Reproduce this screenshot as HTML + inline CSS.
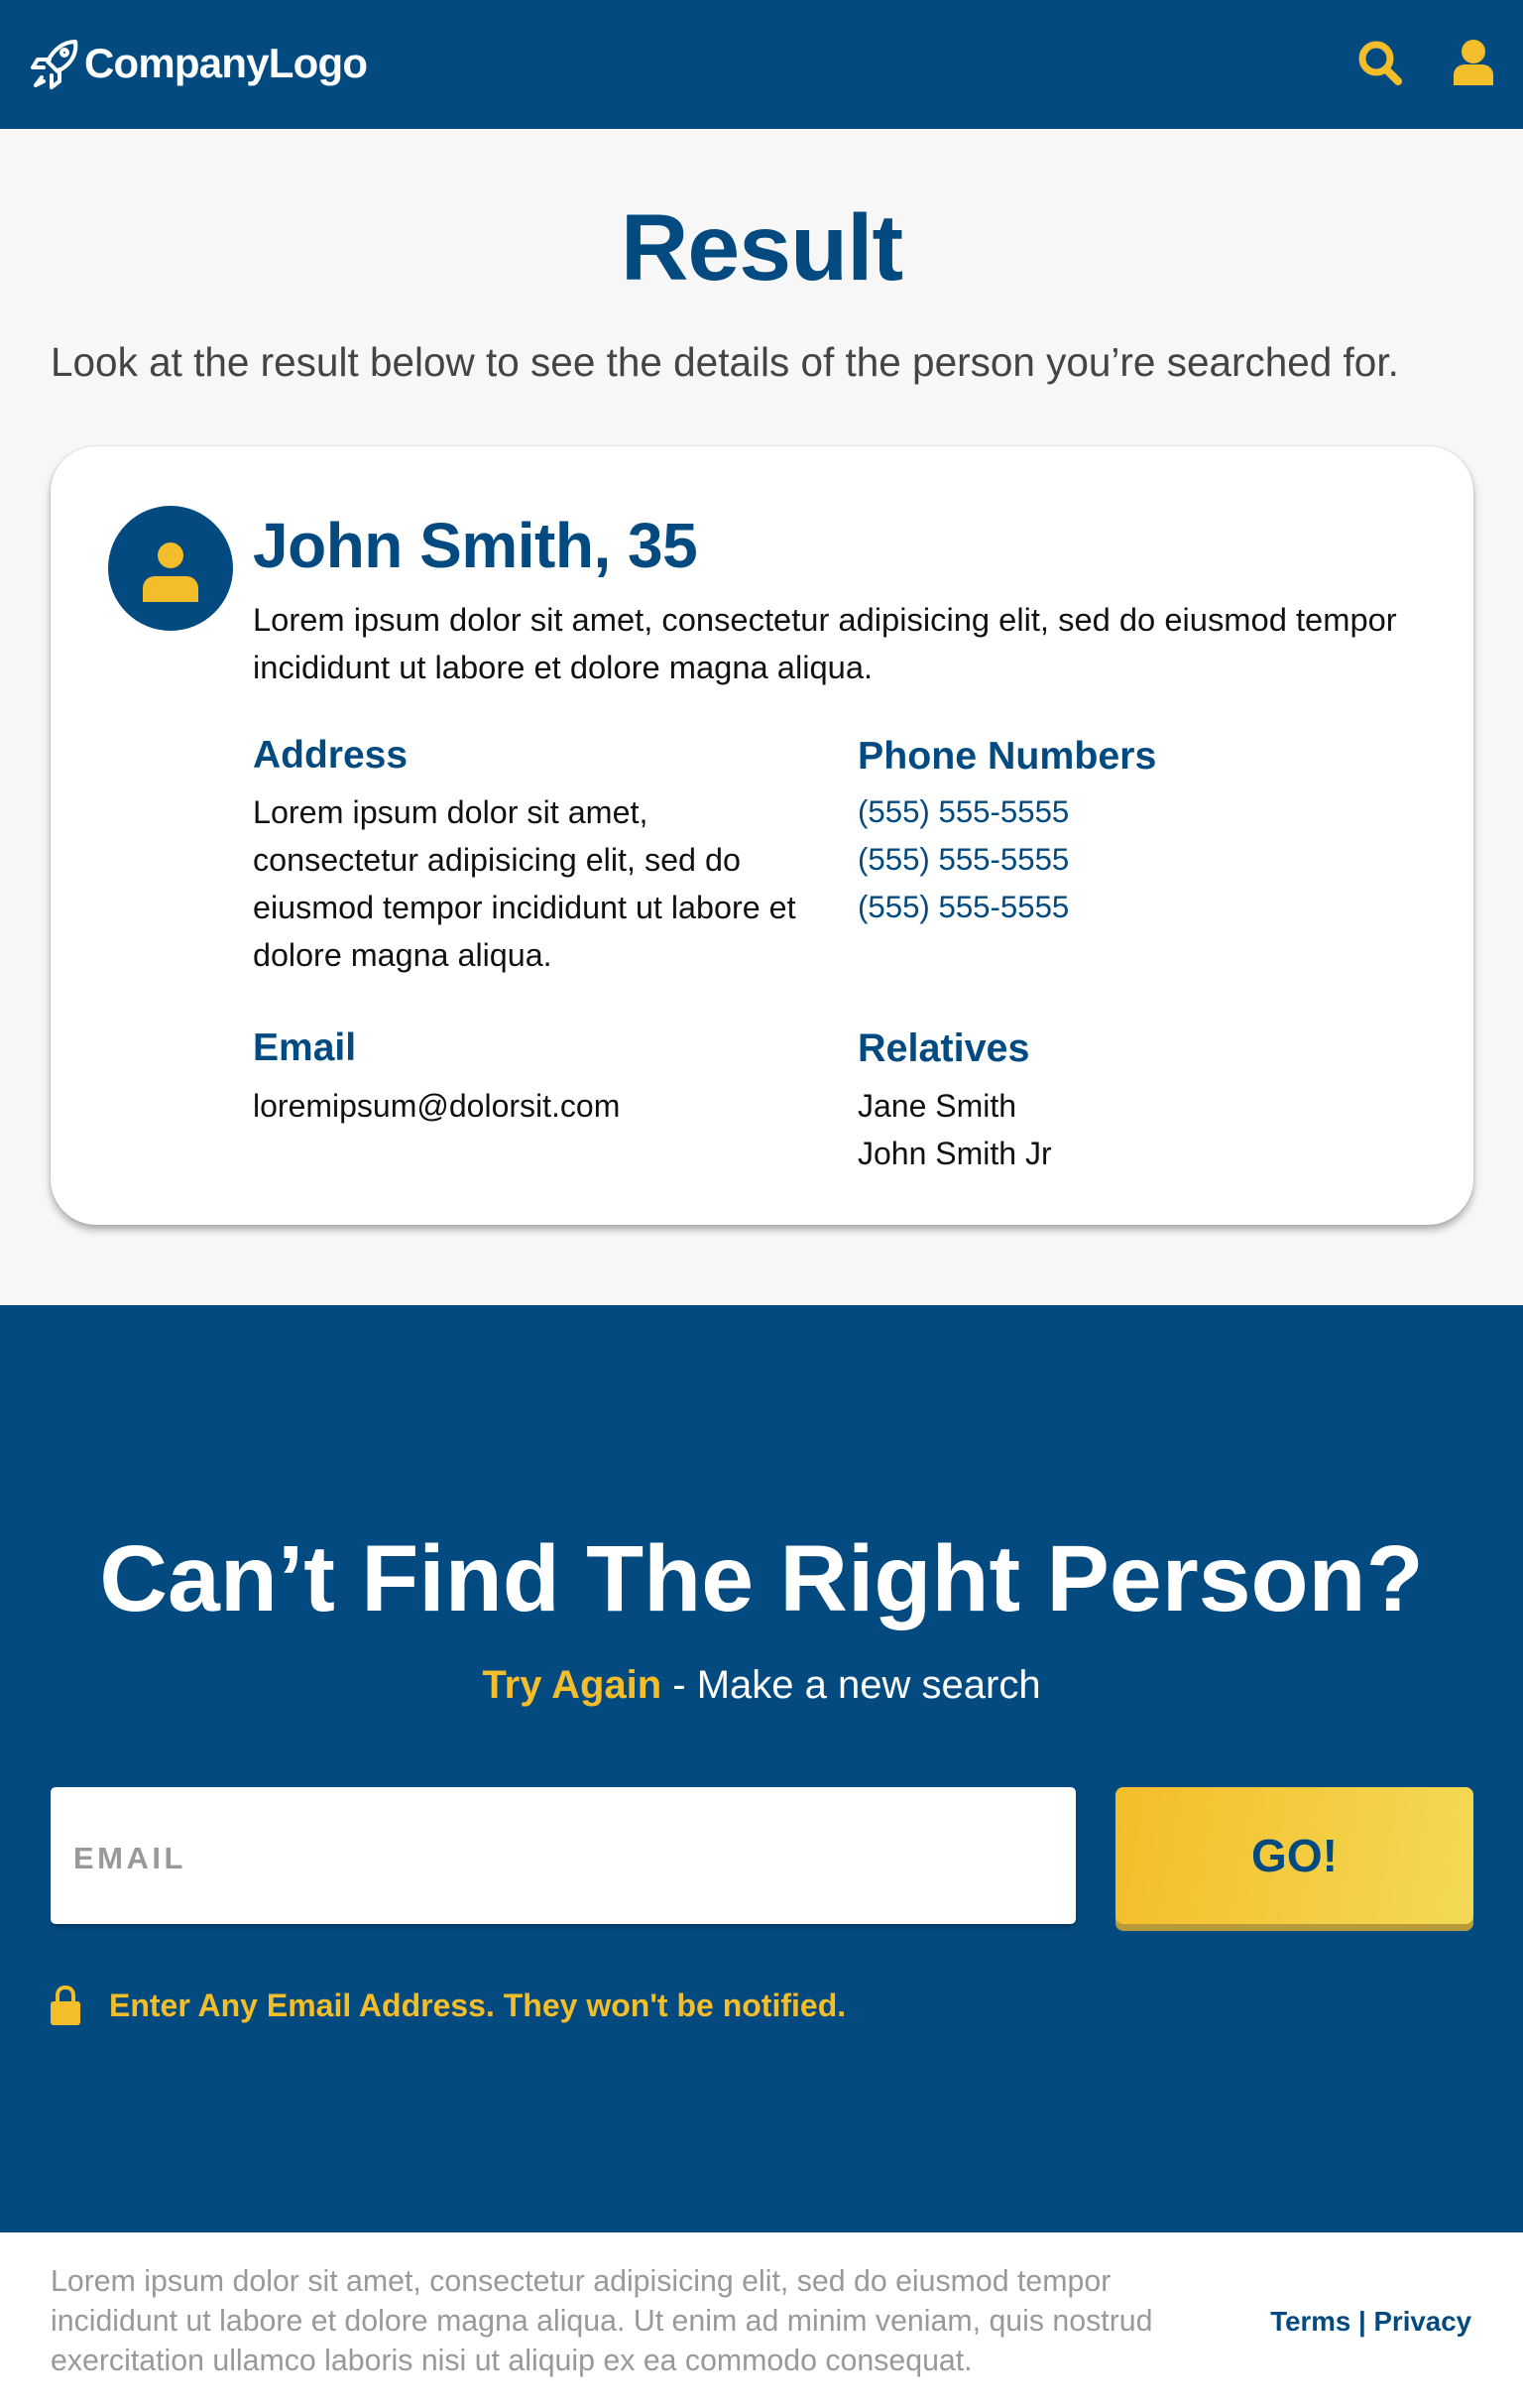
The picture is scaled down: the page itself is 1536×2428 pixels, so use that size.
<!DOCTYPE html>
<html><head><meta charset="utf-8"><style>
*{margin:0;padding:0;box-sizing:border-box}
body{width:1536px;height:2428px;background:#f7f7f7;font-family:"Liberation Sans",Arial,sans-serif;position:relative;overflow:hidden}
.a{position:absolute;white-space:nowrap}
.blue{color:#034a80}
</style></head><body>
<div class="a" style="left:0;top:0;width:1536px;height:130px;background:#034a80"></div>
<svg class="a" style="left:30px;top:38px" width="52" height="54" viewBox="0 0 52 54" fill="none" stroke="#fff" stroke-width="4" stroke-linejoin="round" stroke-linecap="round">
<path d="M46 4 C34 4 24 12 18 24 L28 34 C40 28 48 18 46 4 Z"/>
<circle cx="35" cy="15" r="3"/>
<path d="M20 22 L8 22 L3 30 L14 30"/>
<path d="M30 32 L30 44 L22 50 L22 38"/>
<path d="M12 40 L6 48 L14 44"/>
</svg>
<div class="a" style="left:85px;top:40px;font-size:42px;font-weight:bold;color:#fff;letter-spacing:-0.8px">CompanyLogo</div>
<svg class="a" style="left:1368px;top:38px" width="52" height="52" viewBox="0 0 52 52"><circle cx="20" cy="21" r="14" fill="none" stroke="#f4bd2a" stroke-width="7"/><path d="M31 33 L42 44" stroke="#f4bd2a" stroke-width="8" stroke-linecap="round"/></svg>
<svg class="a" style="left:1464px;top:38px" width="44" height="50" viewBox="0 0 44 50"><circle cx="22" cy="14" r="12" fill="#f4bd2a"/><path d="M2 48 V38 C2 31 7 27 14 27 H30 C37 27 42 31 42 38 V48 Z" fill="#f4bd2a"/></svg>

<div class="a blue" style="left:0;width:1536px;text-align:center;top:196px;font-size:95px;font-weight:bold;letter-spacing:-1px">Result</div>
<div class="a" style="left:51px;top:342px;font-size:40.5px;color:#444">Look at the result below to see the details of the person you’re searched for.</div>

<div class="a" style="left:51px;top:450px;width:1435px;height:785px;background:#fff;border-radius:46px;box-shadow:0 5px 8px rgba(0,0,0,0.3),0 0 2px rgba(0,0,0,0.15)"></div>
<svg class="a" style="left:109px;top:510px" width="126" height="126" viewBox="0 0 126 126"><circle cx="63" cy="63" r="63" fill="#034a80"/><circle cx="63" cy="50" r="13" fill="#f4bd2a"/><path d="M35 97 V84 C35 76 40 71 48 71 H78 C86 71 91 76 91 84 V97 Z" fill="#f4bd2a"/></svg>
<div class="a blue" style="left:255px;top:513px;font-size:64px;font-weight:bold;letter-spacing:-0.5px">John Smith, 35</div>
<div class="a" style="left:255px;top:601px;font-size:32.7px;line-height:48px;color:#111">Lorem ipsum dolor sit amet, consectetur adipisicing elit, sed do eiusmod tempor<br>incididunt ut labore et dolore magna aliqua.</div>

<div class="a blue" style="left:255px;top:740px;font-size:39px;font-weight:bold">Address</div>
<div class="a" style="left:255px;top:795px;font-size:32.3px;line-height:48px;color:#111">Lorem ipsum dolor sit amet,<br>consectetur adipisicing elit, sed do<br>eiusmod tempor incididunt ut labore et<br>dolore magna aliqua.</div>
<div class="a blue" style="left:865px;top:740px;font-size:39.3px;font-weight:bold">Phone Numbers</div>
<div class="a blue" style="left:865px;top:795px;font-size:31.2px;line-height:48px">(555) 555-5555<br>(555) 555-5555<br>(555) 555-5555</div>
<div class="a blue" style="left:255px;top:1035px;font-size:39px;font-weight:bold">Email</div>
<div class="a" style="left:255px;top:1091px;font-size:32px;line-height:48px;color:#111">loremipsum@dolorsit.com</div>
<div class="a blue" style="left:865px;top:1035px;font-size:39.5px;font-weight:bold">Relatives</div>
<div class="a" style="left:865px;top:1091px;font-size:32px;line-height:48px;color:#111">Jane Smith<br>John Smith Jr</div>

<div class="a" style="left:0;top:1316px;width:1536px;height:935px;background:#034a80"></div>
<div class="a" style="left:0;width:1536px;text-align:center;top:1538px;font-size:95px;font-weight:bold;color:#fff">Can’t Find The Right Person?</div>
<div class="a" style="left:0;width:1536px;text-align:center;top:1677px;font-size:40px;color:#fff"><b style="color:#f4bd2a">Try Again</b> - Make a new search</div>
<div class="a" style="left:51px;top:1802px;width:1034px;height:138px;background:#fff;border-radius:5px;box-shadow:0 3px 3px rgba(0,0,0,0.25)"></div>
<div class="a" style="left:74px;top:1856px;font-size:31px;font-weight:bold;color:#999;letter-spacing:3.5px">EMAIL</div>
<div class="a" style="left:1125px;top:1802px;width:361px;height:145px;background:#b89a3a;border-radius:8px"></div>
<div class="a" style="left:1125px;top:1802px;width:361px;height:138px;background:linear-gradient(100deg,#f4bd2a,#f3da55);border-radius:8px;text-align:center;line-height:138px;font-size:46px;font-weight:bold;color:#034a80">GO!</div>
<svg class="a" style="left:50px;top:2001px" width="32" height="42" viewBox="0 0 32 42"><path d="M8 18 V11 C8 6 11 3 16 3 C21 3 24 6 24 11 V18" fill="none" stroke="#f4bd2a" stroke-width="4"/><rect x="1" y="17" width="30" height="24" rx="3" fill="#f4bd2a"/></svg>
<div class="a" style="left:110px;top:2004px;font-size:32px;font-weight:bold;color:#f4bd2a">Enter Any Email Address. They won't be notified.</div>

<div class="a" style="left:0;top:2251px;width:1536px;height:177px;background:#fff"></div>
<div class="a" style="left:51px;top:2281px;font-size:30.3px;line-height:40px;color:#999">Lorem ipsum dolor sit amet, consectetur adipisicing elit, sed do eiusmod tempor<br>incididunt ut labore et dolore magna aliqua. Ut enim ad minim veniam, quis nostrud<br>exercitation ullamco laboris nisi ut aliquip ex ea commodo consequat.</div>
<div class="a blue" style="right:52px;top:2325px;font-size:27.7px;font-weight:bold">Terms | Privacy</div>
</body></html>
